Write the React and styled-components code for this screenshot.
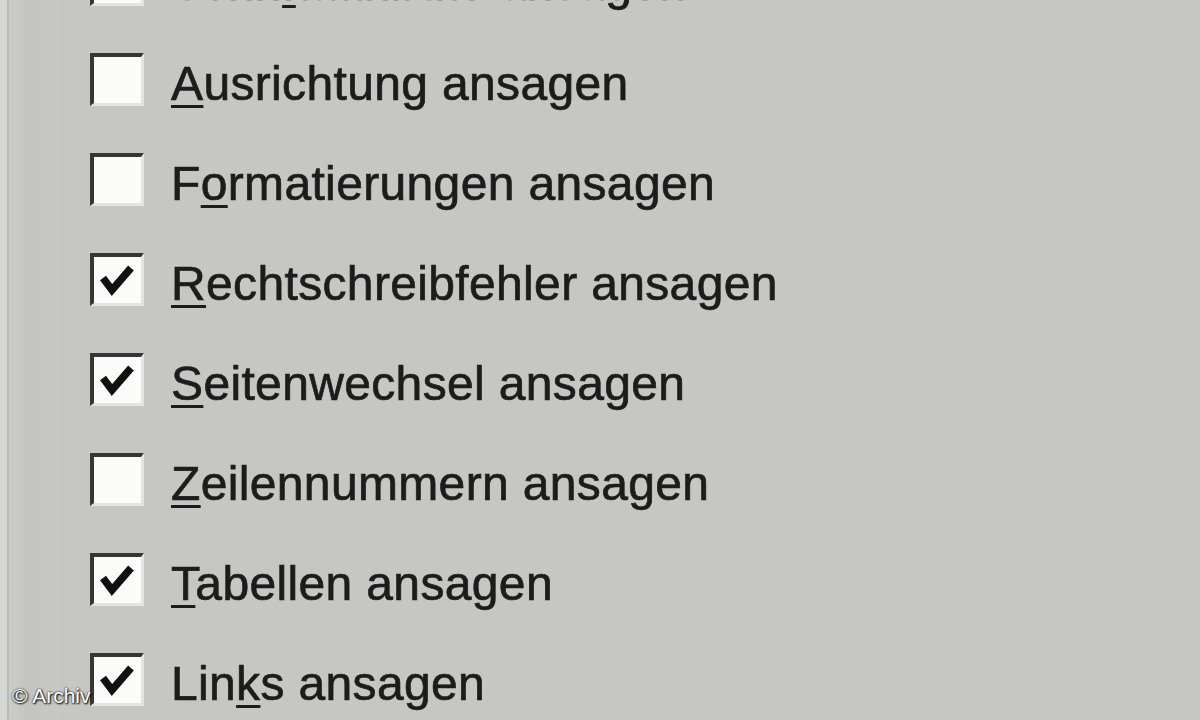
import React from 'react';
import styled, { createGlobalStyle } from 'styled-components';

const GlobalStyle = createGlobalStyle`
  html, body {
    margin: 0;
    padding: 0;
    background: #c6c7c3;
    overflow: hidden;
  }
`;

const Screen = styled.div`
  position: relative;
  width: 1200px;
  height: 720px;
  overflow: hidden;
  display: flex;
  background: #c6c7c3;
  font-family: "Liberation Sans", Arial, sans-serif;
`;

const LeftEdge = styled.div`
  flex: 0 0 60px;
  display: flex;
  background: linear-gradient(90deg, #d4d6d2 0px, #d4d6d2 7px, #b9bbb7 7px, #b9bbb7 9px, #cbccc8 9px, #c4c5c1 30px, #c8c9c5 60px);
`;

const List = styled.div`
  display: flex;
  flex-direction: column;
  margin-top: -71px;
  padding-left: 30px;
  filter: blur(0.5px);
`;

const Row = styled.div`
  height: 100px;
  flex: 0 0 100px;
  display: flex;
  align-items: center;
  gap: 27px;
`;

const Box = styled.div`
  box-sizing: border-box;
  width: 54px;
  height: 53px;
  flex: 0 0 auto;
  background: #fbfbfa;
  border-top: 4px solid #363636;
  border-left: 4px solid #363636;
  border-right: 3px solid #e4e4e2;
  border-bottom: 3px solid #e4e4e2;
  display: flex;
  align-items: center;
  justify-content: center;
`;

const Label = styled.span`
  font-size: 48px;
  line-height: 1;
  letter-spacing: 0.35px;
  color: #1c1c1c;
  -webkit-text-stroke: 0.7px #1c1c1c;
  margin-top: 10px;
  white-space: nowrap;
`;

const Key = styled.span`
  text-decoration: underline;
  text-decoration-thickness: 3px;
  text-underline-offset: 5px;
`;

const Watermark = styled.div`
  position: absolute;
  left: 12px;
  top: 684px;
  font-family: "Liberation Sans", Arial, sans-serif;
  font-size: 21px;
  color: #ffffff;
  text-shadow: 0 0 2px #000, 1px 1px 2px #000;
`;

const Tick = () => (
  <svg width="40" height="36" viewBox="0 0 40 36">
    <polyline
      points="5,16 14,28 33,6"
      fill="none"
      stroke="#111"
      strokeWidth="7.5"
      strokeLinejoin="miter"
    />
  </svg>
);

const options = [
  { pre: 'Schri', key: 'f', post: 'tattribute ansagen', checked: false },
  { pre: '', key: 'A', post: 'usrichtung ansagen', checked: false },
  { pre: 'F', key: 'o', post: 'rmatierungen ansagen', checked: false },
  { pre: '', key: 'R', post: 'echtschreibfehler ansagen', checked: true },
  { pre: '', key: 'S', post: 'eitenwechsel ansagen', checked: true },
  { pre: '', key: 'Z', post: 'eilennummern ansagen', checked: false },
  { pre: '', key: 'T', post: 'abellen ansagen', checked: true },
  { pre: 'Lin', key: 'k', post: 's ansagen', checked: true },
];

export default function App() {
  return (
    <>
      <GlobalStyle />
      <Screen>
        <LeftEdge />
        <List>
          {options.map((o) => (
            <Row key={o.post}>
              <Box>{o.checked && <Tick />}</Box>
              <Label>
                {o.pre}
                <Key>{o.key}</Key>
                {o.post}
              </Label>
            </Row>
          ))}
        </List>
        <Watermark>© Archiv</Watermark>
      </Screen>
    </>
  );
}
